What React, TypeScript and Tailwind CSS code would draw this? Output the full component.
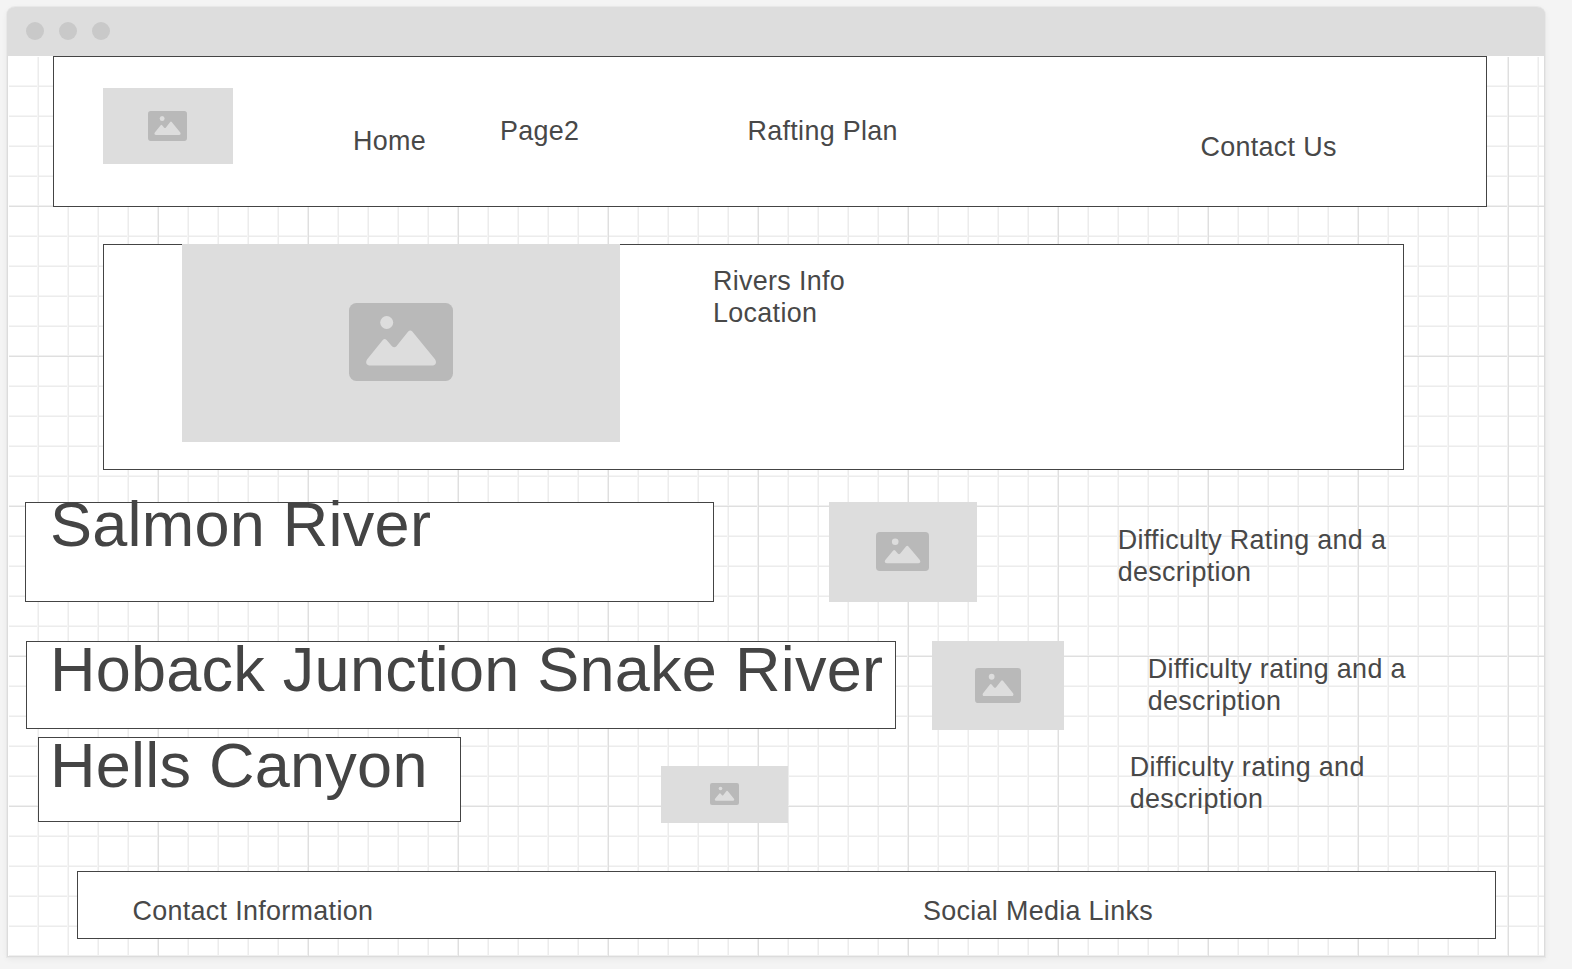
import React from "react";

function Placeholder({ box, icon }: { box: string; icon: string }) {
  return (
    <div className={`flex shrink-0 items-center justify-center bg-[#dddddd] ${box}`}>
      <svg viewBox="0 0 104 78" preserveAspectRatio="none" className={icon}>
        <rect width="104" height="78" rx="7.5" fill="#b9b9b9" />
        <circle cx="37.7" cy="19.5" r="6.5" fill="#dddddd" />
        <path
          d="M18.2 56.2 L33.8 37 Q35.7 34.8 37.6 37 L43.2 43.5 Q45.2 45 47.2 43.5 L59.2 28.6 Q61.2 26.2 63.3 28.6 L86 56.2 C88.2 59.5 86.5 62.6 83 62.6 L21.5 62.6 C17.5 62.6 16 59.5 18.2 56.2 Z"
          fill="#dddddd"
        />
      </svg>
    </div>
  );
}

function Label({ className, children }: { className: string; children: React.ReactNode }) {
  return (
    <p className={`shrink-0 whitespace-nowrap text-[26.9px] leading-8 tracking-[0.32px] text-[#484848] ${className}`}>
      {children}
    </p>
  );
}

function Title({ className, children }: { className: string; children: React.ReactNode }) {
  return (
    <h2 className={`whitespace-nowrap text-[63px] leading-[62px] tracking-[0.25px] ${className}`}>{children}</h2>
  );
}

export default function App() {
  return (
    <div className="h-[969px] w-full overflow-hidden bg-[#f4f4f4] pt-[7px] pl-[7px] font-['Liberation_Sans',Arial,sans-serif] text-[#444444]">
      <div className="flex h-[950px] w-[1538px] flex-col rounded-t-[8px] border border-t-0 border-[#dcdcdc] bg-white shadow-[0_0_0_1px_#e8e8e8,0_2px_6px_rgba(0,0,0,0.06)]">
        <header className="-mx-px flex h-[49px] shrink-0 items-center gap-[15px] rounded-t-[8px] bg-[#dddddd] pb-px pl-[19px]">
          <span className="size-[18px] rounded-full bg-[#c9c9c9]" />
          <span className="size-[18px] rounded-full bg-[#c9c9c9]" />
          <span className="size-[18px] rounded-full bg-[#c9c9c9]" />
        </header>

        <main className="flex min-h-0 flex-1 flex-col items-start border-t border-l border-white bg-[linear-gradient(to_right,transparent_148px,#f0f0f0_148px,#f0f0f0_149px,#dfdfdf_149px),linear-gradient(to_bottom,transparent_148px,#f0f0f0_148px,#f0f0f0_149px,#dfdfdf_149px),linear-gradient(to_right,transparent_28px,#f5f5f5_28px,#f5f5f5_29px,#ececec_29px),linear-gradient(to_bottom,transparent_28px,#f5f5f5_28px,#f5f5f5_29px,#ececec_29px)] [background-clip:padding-box] [background-size:150px_150px,150px_150px,30px_30px,30px_30px]">
          <nav className="-mt-px ml-[44px] flex h-[151px] w-[1434px] shrink-0 items-start border border-[#444444] bg-white">
            <Placeholder box="mt-[31px] ml-[49px] h-[76px] w-[130px]" icon="mr-px h-[30px] w-[39px]" />
            <Label className="mt-[68px] ml-[120px] w-[147px]">Home</Label>
            <Label className="mt-[58px] w-[247.5px]">Page2</Label>
            <Label className="mt-[58px] w-[453px]">Rafting Plan</Label>
            <Label className="mt-[74px]">Contact Us</Label>
          </nav>

          <section className="mt-[37px] ml-[94px] flex h-[226px] w-[1301px] shrink-0 items-start border border-[#444444] bg-white">
            <Placeholder box="-mt-px ml-[78px] h-[198px] w-[438px]" icon="mb-[2px] h-[78px] w-[104px]" />
            <Label className="mt-5 ml-[93px]">
              Rivers Info
              <br />
              Location
            </Label>
          </section>

          <section className="mt-8 ml-4 flex h-[100px] shrink-0 items-start">
            <div className="h-[100px] w-[689px] border border-[#444444] bg-white">
              <Title className="-mt-[10px] ml-[24px]">Salmon River</Title>
            </div>
            <Placeholder box="ml-[115px] h-[100px] w-[148px]" icon="mr-px mb-px h-[39px] w-[53px]" />
            <Label className="mt-[22px] ml-[140.75px]">
              Difficulty Rating and a
              <br />
              description
            </Label>
          </section>

          <section className="mt-[39px] ml-[17px] flex h-[89px] shrink-0 items-start">
            <div className="h-[88px] w-[870px] border border-[#444444] bg-white">
              <Title className="-mt-[4px] ml-[23px]">Hoback Junction Snake River</Title>
            </div>
            <Placeholder box="ml-[36px] h-[89px] w-[132px]" icon="h-[35px] w-[46px]" />
            <Label className="mt-[12px] ml-[83.75px]">
              Difficulty rating and a
              <br />
              description
            </Label>
          </section>

          <section className="mt-[7px] ml-[29px] flex h-[86px] shrink-0 items-start">
            <div className="h-[85px] w-[423px] border border-[#444444] bg-white">
              <Title className="-mt-[4px] ml-[11px]">Hells Canyon</Title>
            </div>
            <Placeholder box="mt-[29px] ml-[200px] h-[57px] w-[127px]" icon="mb-px h-[22px] w-[29px]" />
            <Label className="mt-[14px] ml-[341.75px]">
              Difficulty rating and
              <br />
              description
            </Label>
          </section>

          <footer className="mt-[48px] ml-[68px] flex h-[68px] w-[1419px] shrink-0 items-start border border-[#444444] bg-white">
            <Label className="mt-[23px] ml-[54.5px] w-[790.5px]">Contact Information</Label>
            <Label className="mt-[23px]">Social Media Links</Label>
          </footer>
        </main>
      </div>
    </div>
  );
}
